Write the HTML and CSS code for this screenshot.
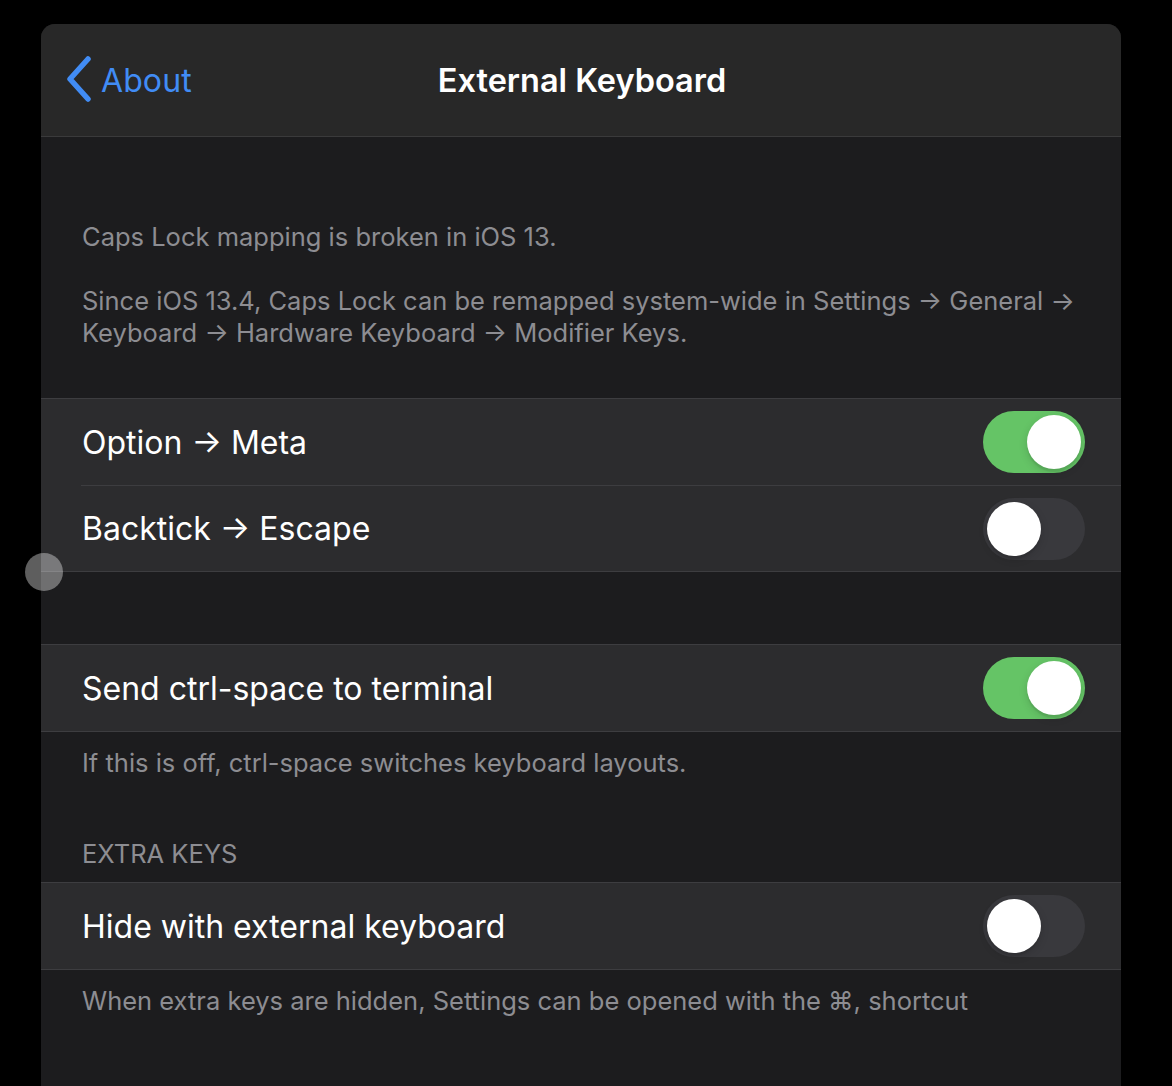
FILE: index.html
```html
<!DOCTYPE html>
<html>
<head>
<meta charset="utf-8">
<link rel="stylesheet" href="styles.css">
</head>
<body>
<div class="sheet">
  <header class="navbar">
    <div class="back">
      <svg class="chevron" width="28" height="46" viewBox="0 0 28 46"><path d="M23 3 L5 23 L23 43" fill="none" stroke="#418cf5" stroke-width="5.5" stroke-linecap="round" stroke-linejoin="round"/></svg>
      <span class="back-label">About</span>
    </div>
    <div class="title">External Keyboard</div>
  </header>
  <main class="content">
    <p class="note intro">Caps Lock mapping is broken in iOS 13.<br><br>Since iOS 13.4, Caps Lock can be remapped system-wide in Settings → General →<br>Keyboard → Hardware Keyboard → Modifier Keys.</p>
    <div class="group">
      <div class="row"><div class="row-inner"><span class="label">Option → Meta</span><span class="toggle on"><span class="knob"></span></span></div></div>
      <div class="row"><div class="row-inner"><span class="label">Backtick → Escape</span><span class="toggle"><span class="knob"></span></span></div></div>
    </div>
    <div class="group g2">
      <div class="row"><div class="row-inner"><span class="label">Send ctrl-space to terminal</span><span class="toggle on"><span class="knob"></span></span></div></div>
    </div>
    <p class="note foot">If this is off, ctrl-space switches keyboard layouts.</p>
    <p class="section-head">EXTRA KEYS</p>
    <div class="group g3">
      <div class="row"><div class="row-inner"><span class="label">Hide with external keyboard</span><span class="toggle"><span class="knob"></span></span></div></div>
    </div>
    <p class="note foot">When extra keys are hidden, Settings can be opened with the ⌘, shortcut</p>
  </main>
</div>
<div class="touch"></div>
</body>
</html>
```
FILE: styles.css
```css
html, body {
  margin: 0;
  padding: 0;
  background: #000;
  height: 1086px;
  overflow: hidden;
  font-family: Inter, "Noto Sans", "Liberation Sans", sans-serif;
}
.sheet {
  margin: 24px 0 0 41px;
  width: 1080px;
  height: 1062px;
  background: #1c1c1e;
  border-radius: 14px 14px 0 0;
  overflow: hidden;
}
.navbar {
  height: 112px;
  background: #282828;
  border-bottom: 1px solid #3a3a3b;
  display: flex;
  align-items: center;
  position: relative;
}
.back {
  display: flex;
  align-items: center;
  padding-left: 24px;
  gap: 8px;
  position: relative;
  z-index: 1;
}
.chevron { display: block; margin-top: -2px; }
.back-label {
  color: #418cf5;
  font-size: 32px;
  letter-spacing: 0.1px;
}
.title {
  position: absolute;
  left: 0;
  right: 0;
  text-align: center;
  color: #fff;
  font-size: 32.5px;
  font-weight: 600;
  letter-spacing: 0;
  padding-left: 2px;
}
.content {
  padding-top: 84px;
}
.note {
  margin: 0;
  padding: 0 30px 0 41px;
  color: #8d8d92;
  font-size: 25.5px;
  line-height: 32px;
  letter-spacing: 0;
}
.intro { margin-bottom: 49px; }
.group {
  background: #2c2c2e;
  border-top: 1px solid #3d3d40;
  border-bottom: 1px solid #3d3d40;
}
.g2 { margin-top: 72px; }
.foot { margin-top: 15px; }
.section-head {
  margin: 59px 0 12px;
  padding-left: 41px;
  color: #8d8d92;
  font-size: 25.5px;
  line-height: 32px;
}
.row {
  padding-left: 40px;
}
.row-inner {
  height: 86px;
  display: flex;
  align-items: center;
  justify-content: space-between;
  padding: 0 36px 0 1px;
}
.row + .row .row-inner {
  border-top: 1px solid #3d3d40;
  height: 85px;
}
.label {
  color: #fff;
  font-size: 32px;
  letter-spacing: 0;
}
.toggle {
  width: 102px;
  height: 62px;
  border-radius: 31px;
  background: #39393d;
  display: flex;
  align-items: center;
  padding: 0 4px;
  box-sizing: border-box;
}
.toggle.on {
  background: #65c466;
  justify-content: flex-end;
}
.knob {
  width: 54px;
  height: 54px;
  border-radius: 50%;
  background: #fff;
  box-shadow: 0 3px 8px rgba(0,0,0,0.15), 0 3px 1px rgba(0,0,0,0.06);
}
.touch {
  position: absolute;
  left: 25px;
  top: 553px;
  width: 38px;
  height: 38px;
  border-radius: 50%;
  background: rgba(255,255,255,0.37);
}
```
